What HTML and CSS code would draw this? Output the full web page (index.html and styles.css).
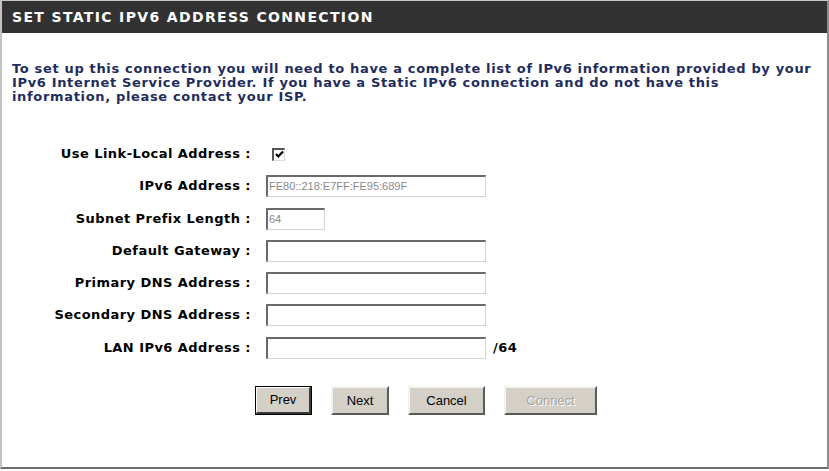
FILE: index.html
```html
<!DOCTYPE html>
<html>
<head>
<meta charset="utf-8">
<link rel="stylesheet" href="styles.css">
</head>
<body>
<div class="panel">
  <div class="header">SET STATIC IPV6 ADDRESS CONNECTION</div>
  <p class="intro">To set up this connection you will need to have a complete list of IPv6 information provided by your<br>IPv6 Internet Service Provider. If you have a Static IPv6 connection and do not have this<br>information, please contact your ISP.</p>
  <div class="form">
    <div class="label">Use Link-Local Address :</div>
    <div class="field"><span class="check"><svg width="9" height="9" viewBox="0 0 9 9"><polyline points="1,4 3.3,6.5 8,1.5" fill="none" stroke="#000" stroke-width="2.2"/></svg></span></div>
    <div class="label">IPv6 Address :</div>
    <div class="field"><span class="input wide disabled">FE80::218:E7FF:FE95:689F</span></div>
    <div class="label">Subnet Prefix Length :</div>
    <div class="field"><span class="input short disabled">64</span></div>
    <div class="label">Default Gateway :</div>
    <div class="field"><span class="input wide"></span></div>
    <div class="label">Primary DNS Address :</div>
    <div class="field"><span class="input wide"></span></div>
    <div class="label">Secondary DNS Address :</div>
    <div class="field"><span class="input wide"></span></div>
    <div class="label">LAN IPv6 Address :</div>
    <div class="field"><span class="input wide"></span><span class="suffix">/64</span></div>
  </div>
  <div class="buttons">
    <button class="btn btn-prev">Prev</button>
    <button class="btn btn-next">Next</button>
    <button class="btn btn-cancel">Cancel</button>
    <button class="btn btn-connect" disabled>Connect</button>
  </div>
</div>
</body>
</html>
```

FILE: styles.css
```css
html, body {
  margin: 0;
  padding: 0;
  background: #ffffff;
}

.panel {
  box-sizing: border-box;
  width: 829px;
  height: 469px;
  border-top: 1px solid #c8c8c8;
  border-left: 2px solid #c4c4c4;
  border-right: 2px solid #8c8c8c;
  border-bottom: 2px solid #6e6e6e;
  font-family: "DejaVu Sans", Verdana, sans-serif;
}

.header {
  height: 32px;
  line-height: 33px;
  background: #323232;
  color: #ffffff;
  font-weight: bold;
  font-size: 14px;
  letter-spacing: 1.35px;
  padding-left: 10px;
  white-space: nowrap;
}

.intro {
  margin: 29px 0 0 10px;
  font-size: 13px;
  font-weight: bold;
  line-height: 14px;
  letter-spacing: 0.66px;
  color: #1f2d5e;
  white-space: nowrap;
}

.form {
  display: grid;
  grid-template-columns: 249px auto;
  column-gap: 15px;
  row-gap: 10.3px;
  margin-top: 39px;
  grid-auto-rows: 22px;
}

.label {
  text-align: right;
  font-size: 13px;
  font-weight: bold;
  letter-spacing: 0.45px;
  color: #000000;
  line-height: 22px;
  white-space: nowrap;
}

.field {
  display: flex;
  align-items: center;
}

.check {
  box-sizing: border-box;
  width: 13px;
  height: 13px;
  margin-left: 6px;
  background: #ffffff;
  border-top: 2px solid #555555;
  border-left: 2px solid #555555;
  border-right: 1px solid #dcdcdc;
  border-bottom: 1px solid #dcdcdc;
  display: flex;
  align-items: center;
  justify-content: center;
}

.input {
  box-sizing: border-box;
  height: 22px;
  background: #ffffff;
  border-top: 2px solid #6a6a6a;
  border-left: 2px solid #6a6a6a;
  border-right: 1px solid #d4d4d4;
  border-bottom: 1px solid #d4d4d4;
  font-family: "Liberation Sans", Arial, sans-serif;
  font-size: 11px;
  line-height: 19px;
  padding-left: 1px;
  color: #8a8a8a;
}

.wide {
  width: 220px;
}

.short {
  width: 59px;
}

.suffix {
  margin-left: 7px;
  font-size: 13px;
  font-weight: bold;
  letter-spacing: 0.5px;
  color: #000000;
}

.buttons {
  display: flex;
  gap: 19px;
  margin-top: 27px;
  padding-left: 253px;
}

.btn {
  box-sizing: border-box;
  height: 29px;
  margin: 0;
  padding: 0;
  background: #d4d0c8;
  border-top: 2px solid #f4f3f0;
  border-left: 2px solid #f4f3f0;
  border-right: 2px solid #5a5a5a;
  border-bottom: 2px solid #5a5a5a;
  font-family: "Liberation Sans", Tahoma, sans-serif;
  font-size: 13px;
  color: #000000;
}

.btn-prev {
  width: 57px;
  outline: 1px solid #000000;
  outline-offset: -1px;
  border-top-color: #ffffff;
  border-left-color: #ffffff;
  border-right: 3px solid #3a3a3a;
  border-bottom: 3px solid #3a3a3a;
}

.btn-next {
  width: 58px;
}

.btn-cancel {
  width: 77px;
}

.btn-connect {
  width: 93px;
  color: #a8a49c;
  text-shadow: 1px 1px 0 #ffffff;
}
```
